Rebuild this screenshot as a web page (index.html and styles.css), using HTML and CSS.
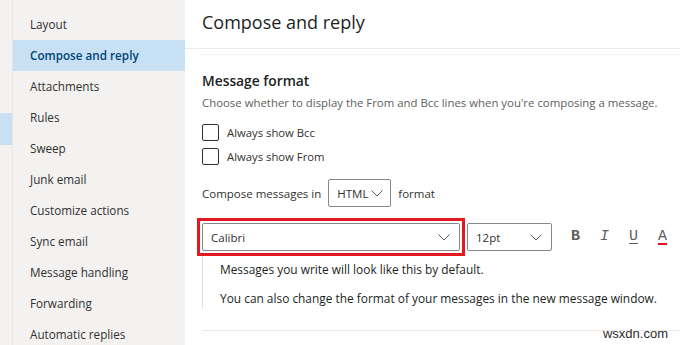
FILE: index.html
```html
<!DOCTYPE html>
<html lang="en">
<head>
    <meta charset="UTF-8">
    <title>Compose and reply</title>
    <link rel="stylesheet" href="styles.css">
</head>
<body>
    <div class="rail">
        <div class="rail-active"></div>
    </div>

    <ul class="nav">
        <li>Layout</li>
        <li class="active">Compose and reply</li>
        <li>Attachments</li>
        <li>Rules</li>
        <li>Sweep</li>
        <li>Junk email</li>
        <li>Customize actions</li>
        <li>Sync email</li>
        <li>Message handling</li>
        <li>Forwarding</li>
        <li>Automatic replies</li>
    </ul>

    <div class="main">
        <div class="header">
            <h1>Compose and reply</h1>
        </div>

        <div class="content">
            <h2>Message format</h2>
            <p class="desc">Choose whether to display the From and Bcc lines when you're composing a message.</p>

            <label class="check"><span class="box"></span>Always show Bcc</label>
            <label class="check"><span class="box"></span>Always show From</label>

            <div class="compose-row">
                <span>Compose messages in</span>
                <div class="select select-html">
                    <span>HTML</span>
                    <svg class="chev" width="12" height="7" viewBox="0 0 12 7"><path d="M0.5 0.5 L6 6 L11.5 0.5" fill="none" stroke="#605e5c" stroke-width="1"/></svg>
                </div>
                <span>format</span>
            </div>

            <div class="font-row">
                <div class="highlight">
                    <div class="select select-font">
                        <span>Calibri</span>
                        <svg class="chev" width="12" height="7" viewBox="0 0 12 7"><path d="M0.5 0.5 L6 6 L11.5 0.5" fill="none" stroke="#605e5c" stroke-width="1"/></svg>
                    </div>
                </div>
                <div class="select select-size">
                    <span>12pt</span>
                    <svg class="chev" width="12" height="7" viewBox="0 0 12 7"><path d="M0.5 0.5 L6 6 L11.5 0.5" fill="none" stroke="#605e5c" stroke-width="1"/></svg>
                </div>
                <div class="tools">
                    <span class="tool bold">B</span>
                    <span class="tool italic">I</span>
                    <span class="tool under">U</span>
                    <span class="tool color">A</span>
                </div>
            </div>

            <div class="preview">
                <p>Messages you write will look like this by default.</p>
                <p>You can also change the format of your messages in the new message window.</p>
            </div>

            <div class="bottom-line"></div>
        </div>
    </div>

    <div class="watermark">wsxdn.com</div>
</body>
</html>
```

FILE: styles.css
```css
* {
    box-sizing: border-box;
    margin: 0;
    padding: 0;
}
body {
    font-family: 'Open Sans', 'Noto Sans', sans-serif;
    color: #323130;
    display: flex;
    height: 345px;
    overflow: hidden;
    background: white;
}
.rail {
    flex-shrink: 0;
    width: 13px;
    background: #f3f2f1;
    border-right: 1px solid #e8e6e4;
    padding-top: 113px;
}
.rail-active {
    height: 32px;
    background: #c7e0f4;
}
.nav {
    flex-shrink: 0;
    list-style: none;
    width: 172px;
    background: #f3f2f1;
    padding-top: 9px;
}
.nav li {
    height: 31px;
    line-height: 31px;
    padding-left: 17px;
    font-size: 11.7px;
    white-space: nowrap;
}
.nav li.active {
    background: #c7e0f4;
    color: #004578;
    font-weight: 600;
}
.main {
    flex: 1;
    min-width: 0;
    position: relative;
}
.header {
    height: 49px;
    padding-left: 17px;
    border-bottom: 1px solid #edebe9;
}
h1 {
    font-size: 18px;
    font-weight: 400;
    line-height: 45px;
    color: #201f1e;
}
.content {
    margin: 5px 0 0 15px;
    padding: 15px 0 0 2px;
    border-top: 1px solid #f3f2f1;
}
h2 {
    font-size: 13.8px;
    font-weight: 600;
    line-height: 22px;
    color: #201f1e;
}
.desc {
    font-size: 11.4px;
    line-height: 18px;
    color: #605e5c;
    margin-top: 2px;
    white-space: nowrap;
}
.check {
    display: flex;
    align-items: center;
    height: 24px;
    font-size: 11.3px;
}
.check:first-of-type {
    margin-top: 8px;
}
.box {
    width: 17px;
    height: 17px;
    border: 1px solid #323130;
    border-radius: 2px;
    margin-right: 8px;
}
.compose-row {
    display: flex;
    align-items: center;
    gap: 7px;
    margin-top: 11px;
    font-size: 11.5px;
}
.select {
    display: flex;
    align-items: center;
    justify-content: space-between;
    height: 28px;
    border: 1px solid #8a8886;
    border-radius: 2px;
    font-size: 11.5px;
    padding: 0 9px 0 8px;
}
.select-html {
    width: 63px;
    padding: 0 7px 0 8px;
}
.font-row {
    display: flex;
    align-items: center;
    margin-top: 16px;
}
.highlight {
    border: 3px solid #e3191f;
    padding: 2px;
    margin: -5px 0 -5px -5px;
}
.select-font {
    width: 258px;
}
.select-size {
    width: 85px;
    margin-left: 2px;
}
.tools {
    display: flex;
    margin-left: 9px;
}
.tool {
    width: 29px;
    text-align: center;
    font-family: 'Liberation Mono', monospace;
    font-size: 15px;
    color: #605e5c;
    line-height: 18px;
}
.bold {
    font-weight: bold;
}
.italic {
    font-style: italic;
}
.under {
    text-decoration: underline;
    text-underline-offset: 3px;
}
.color {
    text-decoration: underline;
    text-decoration-color: #e81123;
    text-decoration-thickness: 2px;
    text-underline-offset: 3px;
}
.preview {
    margin-top: 5px;
    padding: 3px 0 0 17px;
    border-left: 1px solid #e1dfdd;
    font-size: 11.9px;
    color: #201f1e;
}
.preview p {
    line-height: 20px;
    white-space: nowrap;
}
.preview p + p {
    margin-top: 9px;
}
.bottom-line {
    margin-top: 22px;
    border-top: 1px solid #edebe9;
}
.watermark {
    position: absolute;
    right: 12px;
    bottom: 4px;
    font-family: 'Liberation Sans', sans-serif;
    font-size: 13px;
    color: #2b2b2b;
}
```
